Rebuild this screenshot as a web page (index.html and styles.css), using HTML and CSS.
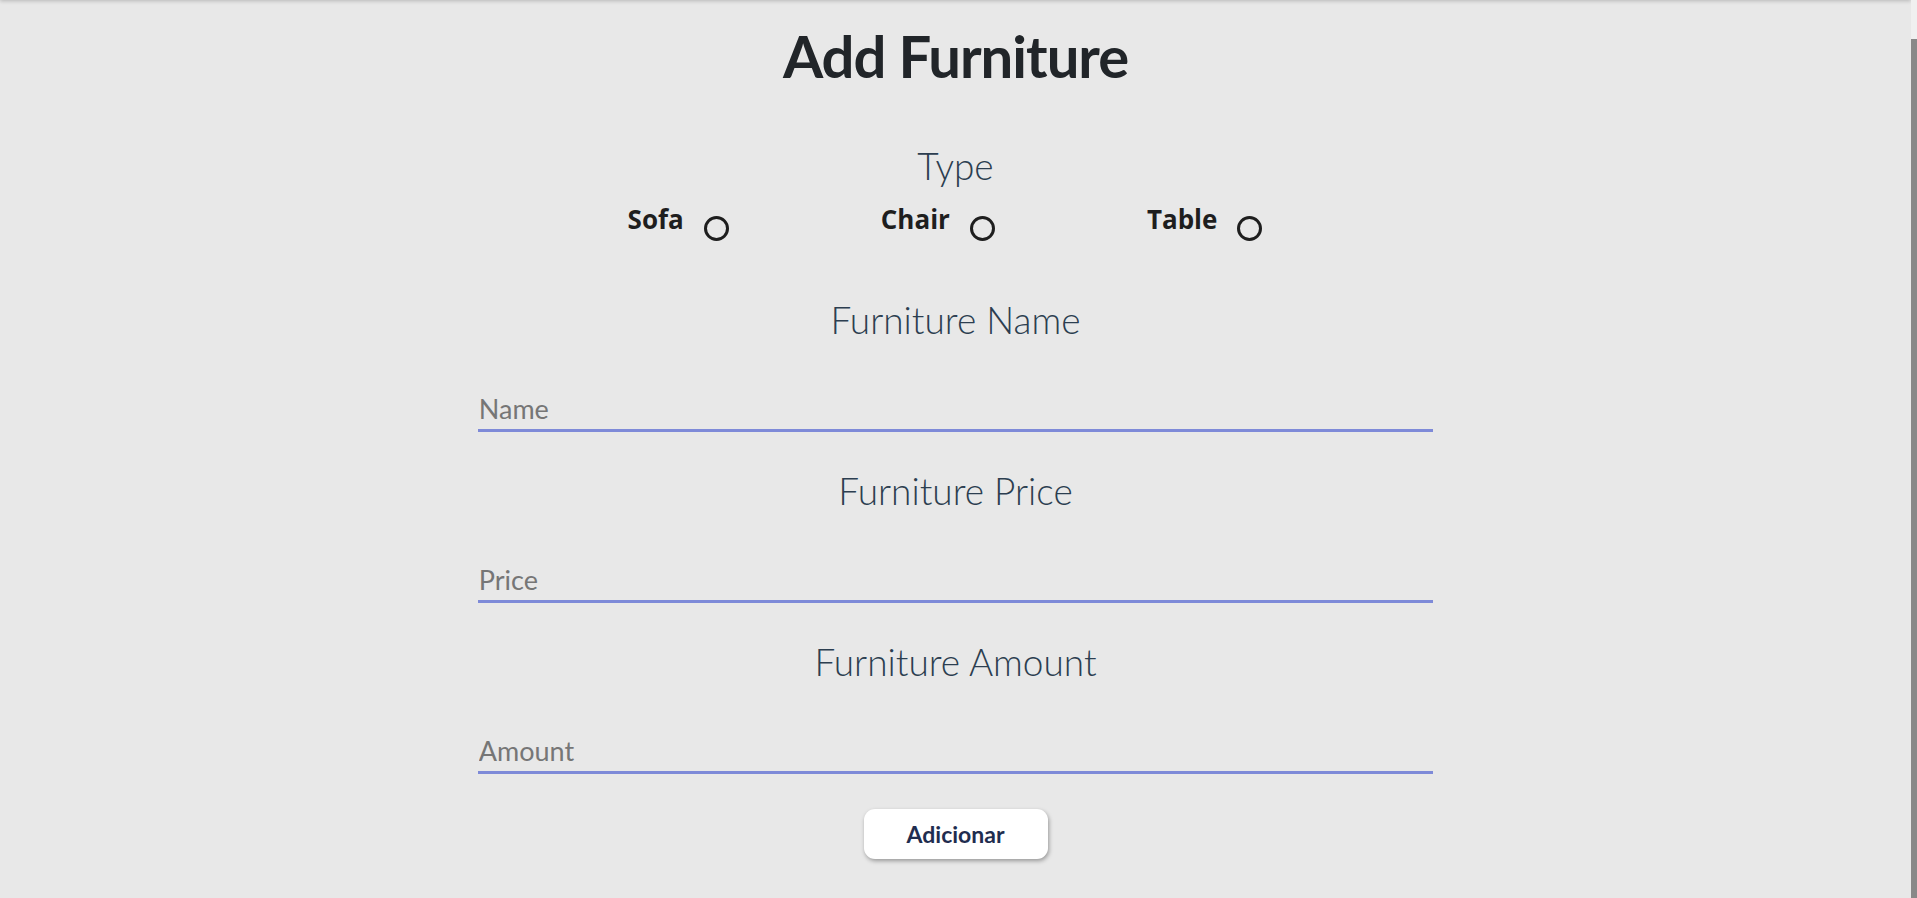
FILE: index.html
```html
<!DOCTYPE html>
<html lang="en">
<head>
<meta charset="utf-8">
<title>Add Furniture</title>
<link rel="stylesheet" href="styles.css">
</head>
<body>
<header class="navbar"></header>
<main class="page">
  <h1 class="title">Add Furniture</h1>
  <section class="type-field">
    <h2 class="heading">Type</h2>
    <div class="radios">
      <label class="option"><span class="option-text">Sofa</span><input class="radio" type="radio" name="type" value="sofa"></label>
      <label class="option"><span class="option-text">Chair</span><input class="radio" type="radio" name="type" value="chair"></label>
      <label class="option"><span class="option-text">Table</span><input class="radio" type="radio" name="type" value="table"></label>
    </div>
  </section>
  <section class="field field-first">
    <h2 class="heading">Furniture Name</h2>
    <input class="text-input" type="text" placeholder="Name">
  </section>
  <section class="field">
    <h2 class="heading">Furniture Price</h2>
    <input class="text-input" type="text" placeholder="Price">
  </section>
  <section class="field">
    <h2 class="heading">Furniture Amount</h2>
    <input class="text-input" type="text" placeholder="Amount">
  </section>
  <div class="actions">
    <button class="btn" type="button">Adicionar</button>
  </div>
</main>
<div class="scrollbar"><div class="scrollbar-thumb"></div></div>
<script src="script.js"></script>
</body>
</html>
```

FILE: styles.css
```css
html {
  scroll-behavior: auto;
}
body {
  margin: 0;
  padding-right: 6px;
  background: #e8e8e8;
  font-family: Lato, "Open Sans", "Liberation Sans", sans-serif;
  color: #2c3e50;
}
.scrollbar {
  position: fixed;
  top: 0;
  right: 0;
  width: 6px;
  height: 100vh;
  background: #f0f0f0;
  display: flex;
  flex-direction: column;
  justify-content: flex-end;
  z-index: 5;
}
.scrollbar-thumb {
  height: calc(100vh - 39px);
  background: #888888;
}
.navbar {
  position: relative;
  z-index: 1;
  height: 41px;
  background: #e8e8e8;
  box-shadow: 0 1px 4px rgba(0, 0, 0, 0.22);
}
.page {
  min-height: 100vh;
  box-sizing: border-box;
  padding-top: 21px;
  display: flex;
  flex-direction: column;
  align-items: center;
}
.title {
  margin: 0;
  font-size: 58px;
  line-height: 70px;
  font-weight: 700;
  letter-spacing: -1px;
  color: #212529;
  text-align: center;
}
.type-field {
  margin-top: 53px;
  display: flex;
  flex-direction: column;
  align-items: center;
}
.heading {
  margin: 0;
  font-size: 37px;
  line-height: 44px;
  font-weight: 300;
  color: #2c3e50;
  text-align: center;
}
.radios {
  margin-top: 17px;
  display: flex;
  justify-content: center;
  align-items: flex-start;
  gap: 131px;
  height: 36px;
}
.option {
  display: flex;
  align-items: flex-start;
}
.option-text {
  font-family: "Open Sans", Lato, "Liberation Sans", sans-serif;
  font-size: 26px;
  line-height: 29px;
  font-weight: 700;
  color: #1e1e1e;
}
.radio {
  appearance: none;
  -webkit-appearance: none;
  box-sizing: border-box;
  width: 25px;
  height: 25px;
  margin: 11px 21px 0 20px;
  border: 3px solid #1e1e1e;
  border-radius: 50%;
  background: transparent;
}
.field {
  width: 50%;
  margin-top: 37px;
  display: flex;
  flex-direction: column;
  align-items: stretch;
}
.field-first {
  margin-top: 57px;
}
.text-input {
  margin-top: 51px;
  box-sizing: border-box;
  width: 100%;
  padding: 0 0 4px 1px;
  border: none;
  border-bottom: 3px solid #7e8ad8;
  background: transparent;
  font-family: Lato, "Open Sans", "Liberation Sans", sans-serif;
  font-size: 27px;
  line-height: 32px;
  color: #333333;
  outline: none;
}
.text-input::placeholder {
  color: #767676;
}
.actions {
  margin-top: 35px;
  display: flex;
  justify-content: center;
}
.btn {
  width: 184px;
  height: 50px;
  border: none;
  border-radius: 11px;
  background: #ffffff;
  box-shadow: 1px 2px 4px rgba(0, 0, 0, 0.35);
  font-family: Lato, "Open Sans", "Liberation Sans", sans-serif;
  font-size: 23px;
  font-weight: 700;
  color: #1f2d4f;
  padding: 0;
}
```

FILE: script.js
```js
window.scrollTo(0, document.documentElement.scrollHeight);
window.addEventListener('load', function () {
  window.scrollTo(0, document.documentElement.scrollHeight);
});
```
